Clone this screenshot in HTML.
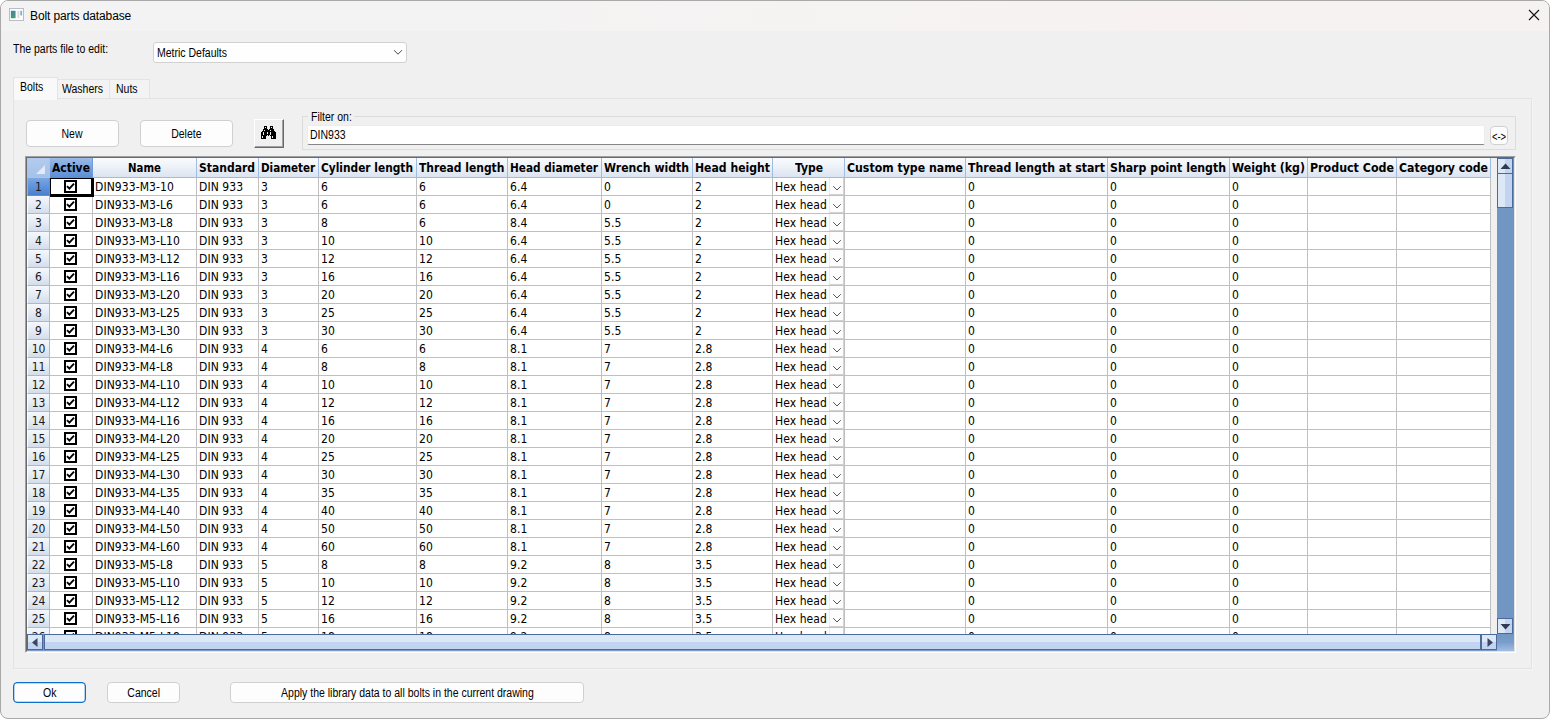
<!DOCTYPE html>
<html lang="en"><head><meta charset="utf-8"><title>Bolt parts database</title>
<style>
html,body{margin:0;padding:0;}
body{width:1550px;height:720px;overflow:hidden;background:#fff;position:relative;
 font-family:"Liberation Sans",sans-serif;font-size:12px;color:#000;}
.abs{position:absolute;}
#win{position:absolute;left:0;top:0;width:1548px;height:717px;border:1px solid #a9a9a9;border-radius:8px;background:#f0f0f0;overflow:hidden;}
#title{position:absolute;left:0;top:0;width:1548px;height:30px;background:linear-gradient(90deg,#f3f3f3 0%,#f4f3f3 35%,#f7f2f1 75%,#f6f2f2 100%);}
#title .cap{position:absolute;left:29px;top:7px;font-size:12px;line-height:16px;letter-spacing:-0.12px;white-space:nowrap;}
.ms{font-family:"Liberation Sans",sans-serif;font-size:12px;white-space:nowrap;transform-origin:0 0;transform:scaleX(0.875);letter-spacing:0;}
.btn{position:absolute;box-sizing:border-box;background:#fdfdfd;border:1px solid #d0d0d0;border-radius:4px;text-align:center;}
.btn span{display:inline-block;font-size:12px;white-space:nowrap;transform:scaleX(0.875);line-height:14px;}
#grid{position:absolute;left:24px;top:155px;width:1491px;height:497px;box-sizing:border-box;border-left:1px solid #a0a0a0;border-top:1px solid #a0a0a0;border-right:1px solid #fff;border-bottom:1px solid #fff;}
#grid2{position:absolute;left:0;top:0;width:1489px;height:495px;box-sizing:border-box;border-left:1px solid #696969;border-top:1px solid #696969;border-right:1px solid #e3e3e3;border-bottom:1px solid #e3e3e3;background:#fff;}
#gi{position:absolute;left:0;top:0;width:1487px;height:493px;overflow:hidden;background:#f0f0f0;font-family:"DejaVu Sans Condensed","DejaVu Sans","Liberation Sans",sans-serif;font-size:12px;}
#cells{position:absolute;left:0;top:0;width:1464px;height:476px;overflow:hidden;
 background-color:#fff;}
.hd{position:absolute;top:0;height:20px;box-sizing:border-box;border-right:1px solid #9fbbe0;border-bottom:1px solid #9fbbe0;
 background:linear-gradient(180deg,#f9fbfd 0%,#eef2f8 45%,#dbe4f1 100%);font-weight:bold;white-space:nowrap;overflow:hidden;line-height:14px;}
.hd span{position:absolute;top:3px;white-space:nowrap;transform-origin:0 0;}
.rh{position:absolute;left:0;width:23px;height:18px;box-sizing:border-box;border-right:1px solid #9fbbe0;border-bottom:1px solid #9fbbe0;border-left:1px solid #fff;
 background:linear-gradient(180deg,#f5f8fc 0%,#e6ecf5 50%,#d3ddec 100%);text-align:center;line-height:16px;color:#1a1a1a;}
.rh span{display:inline-block;position:relative;top:0.5px;}
.vl{position:absolute;top:20px;width:1px;height:460px;background:#c0c0c0;}
.hl{position:absolute;left:22px;height:1px;width:1442px;background:#c0c0c0;}
.c{position:absolute;white-space:nowrap;line-height:14px;height:14px;color:#000;letter-spacing:0.08px;}
.cb{position:absolute;width:9px;height:9px;border:2px solid #000;background:#fff;}
.cb svg{position:absolute;left:0;top:0;}
.dd{position:absolute;width:15px;height:17px;box-sizing:border-box;background:#fdfdfd;border-left:1px solid #ececec;border-bottom:1px solid #d2d2d2;border-right:1px solid #d2d2d2;}
.dd svg{position:absolute;left:1.5px;top:7px;}
</style></head><body>
<div id="win">
<div id="title">
<svg class="abs" style="left:8px;top:7px" width="15" height="13" viewBox="0 0 16 14" preserveAspectRatio="none"><defs><linearGradient id="ig" x1="0" y1="0" x2="1" y2="1"><stop offset="0" stop-color="#3f7fb5"/><stop offset="1" stop-color="#4ea25a"/></linearGradient></defs><rect x="0.5" y="0.5" width="15" height="13" fill="#fdfdfd" stroke="#b4b9c3"/><rect x="2" y="3" width="5" height="8" fill="url(#ig)"/><rect x="9" y="3" width="2" height="8" fill="#dcdcdc"/><rect x="12" y="3" width="2" height="5" fill="#7fb6c9"/></svg>
<div class="cap">Bolt parts database</div>
<svg class="abs" style="left:1527px;top:8px" width="12" height="12" viewBox="0 0 12 12"><path d="M1 1 L11 11 M11 1 L1 11" stroke="#111" stroke-width="1.1" fill="none"/></svg>
</div>

<div class="abs ms" style="left:12px;top:41px;line-height:14px">The parts file to edit:</div>
<div class="abs" style="left:152px;top:41px;width:254px;height:21px;box-sizing:border-box;border:1px solid #d1d1d1;border-radius:3px;background:#fefefe"></div>
<div class="abs ms" style="left:156px;top:45px;line-height:14px">Metric Defaults</div>
<svg class="abs" style="left:392px;top:48px" width="10" height="7" viewBox="0 0 10 7"><path d="M1 1.2 L5 5.2 L9 1.2" stroke="#444" stroke-width="1" fill="none"/></svg>
<div class="abs" style="left:12px;top:97px;width:1519px;height:571px;box-sizing:border-box;border:1px solid #e3e3e3;background:#f0f0f0;box-shadow:1px 1px 0 #f5f5f5"></div>
<div class="abs" style="left:56px;top:78px;width:53px;height:19px;box-sizing:border-box;border:1px solid #e3e3e3;border-bottom:none;background:#f3f3f3"></div>
<div class="abs" style="left:108px;top:78px;width:41px;height:19px;box-sizing:border-box;border:1px solid #e3e3e3;border-bottom:none;background:#f3f3f3"></div>
<div class="abs" style="left:12px;top:76px;width:45px;height:23px;box-sizing:border-box;border:1px solid #e3e3e3;border-bottom:none;background:#f9f9f9"></div>
<div class="abs ms" style="left:19px;top:79px;line-height:14px">Bolts</div>
<div class="abs ms" style="left:61px;top:81px;line-height:14px">Washers</div>
<div class="abs ms" style="left:115px;top:81px;line-height:14px">Nuts</div>
<div class="btn" style="left:25px;top:119px;width:93px;height:27px;padding-top:6px"><span>New</span></div>
<div class="btn" style="left:139px;top:119px;width:93px;height:27px;padding-top:6px"><span>Delete</span></div>
<div class="abs" style="left:253px;top:118px;width:30px;height:29px;box-sizing:border-box;background:#f0f0f0;border-top:1px solid #fff;border-left:1px solid #fff;border-right:1px solid #696969;border-bottom:1px solid #696969;"><div class="abs" style="left:0;top:0;width:27px;height:26px;border-right:1px solid #a0a0a0;border-bottom:1px solid #a0a0a0"></div><svg class="abs" style="left:6px;top:6px" width="15" height="13" viewBox="0 0 15 13" shape-rendering="crispEdges"><path d="M3 0h3v1h-3zM9 0h3v1h-3zM3 1h1v1h-1zM5 1h1v1h-1zM9 1h1v1h-1zM11 1h1v1h-1zM3 2h3v1h-3zM9 2h3v1h-3zM2 3h5v1h-5zM8 3h5v1h-5zM2 4h1v1h-1zM4 4h5v1h-5zM10 4h3v1h-3zM1 5h13v1h-13zM0 6h2v1h-2zM3 6h3v1h-3zM7 6h2v1h-2zM10 6h5v1h-5zM0 7h2v1h-2zM3 7h3v1h-3zM7 7h2v1h-2zM10 7h5v1h-5zM0 8h2v1h-2zM3 8h6v1h-6zM10 8h5v1h-5zM0 9h6v1h-6zM7 9h1v1h-1zM9 9h6v1h-6zM0 10h1v1h-1zM2 10h3v1h-3zM10 10h1v1h-1zM12 10h3v1h-3zM0 11h1v1h-1zM2 11h3v1h-3zM10 11h1v1h-1zM12 11h3v1h-3zM0 12h5v1h-5zM10 12h5v1h-5z" fill="#000"/></svg></div>
<div class="abs" style="left:301px;top:115px;width:1214px;height:34px;box-sizing:border-box;border:1px solid #dcdcdc"></div>
<div class="abs" style="left:307px;top:109px;width:46px;height:14px;background:#f0f0f0"></div>
<div class="abs ms" style="left:310px;top:109px;line-height:14px">Filter on:</div>
<div class="abs" style="left:306px;top:124px;width:1178px;height:20px;box-sizing:border-box;background:#fff;border:1px solid #ececec;border-bottom:1px solid #868686;border-radius:2px"></div>
<div class="abs ms" style="left:309px;top:127px;line-height:14px">DIN933</div>
<div class="btn" style="left:1489px;top:125px;width:18px;height:19px"></div>
<div class="abs" style="left:1479px;top:128.5px;width:38px;text-align:center;font-size:13.5px;line-height:14px;white-space:nowrap;transform:scaleX(0.7)">&lt;-&gt;</div>
<div id="grid"><div id="grid2"><div id="gi">
<div id="cells">
<div class="abs" style="left:0;top:0;width:23px;height:20px;background:linear-gradient(180deg,#b3cbed 0%,#a6c1e8 100%);border-right:1px solid #a9c3ea;box-sizing:border-box;border-bottom:1px solid #a9c3ea"><svg class="abs" style="left:9px;top:7px" width="9" height="9" viewBox="0 0 9 9"><path d="M9 0V9H0z" fill="#e1eaf8"/></svg></div>
<div class="hd" style="left:23px;width:43px;background:linear-gradient(180deg,#9bbbe8 0%,#7aa4df 50%,#5b8fd6 100%);border-right-color:#6f9cdc;border-bottom-color:#5b8fd6;"><span style="left:2.0px;transform:scaleX(1.000)">Active</span></div>
<div class="hd" style="left:66px;width:104px;"><span style="left:35.0px;transform:scaleX(0.945)">Name</span></div>
<div class="hd" style="left:170px;width:62px;"><span style="left:2.0px;transform:scaleX(1.000)">Standard</span></div>
<div class="hd" style="left:232px;width:60px;"><span style="left:2.4px;transform:scaleX(0.962)">Diameter</span></div>
<div class="hd" style="left:292px;width:98px;"><span style="left:2.0px;transform:scaleX(0.984)">Cylinder length</span></div>
<div class="hd" style="left:390px;width:91px;"><span style="left:2.0px;transform:scaleX(0.996)">Thread length</span></div>
<div class="hd" style="left:481px;width:94px;"><span style="left:2.4px;transform:scaleX(0.975)">Head diameter</span></div>
<div class="hd" style="left:575px;width:91px;"><span style="left:2.0px;transform:scaleX(1.010)">Wrench width</span></div>
<div class="hd" style="left:666px;width:80px;"><span style="left:2.0px;transform:scaleX(1.008)">Head height</span></div>
<div class="hd" style="left:746px;width:72px;"><span style="left:22.0px;transform:scaleX(0.999)">Type</span></div>
<div class="hd" style="left:818px;width:121px;"><span style="left:2.0px;transform:scaleX(1.016)">Custom type name</span></div>
<div class="hd" style="left:939px;width:142px;"><span style="left:2.0px;transform:scaleX(1.014)">Thread length at start</span></div>
<div class="hd" style="left:1081px;width:122px;"><span style="left:2.0px;transform:scaleX(1.015)">Sharp point length</span></div>
<div class="hd" style="left:1203px;width:78px;"><span style="left:2.0px;transform:scaleX(1.019)">Weight (kg)</span></div>
<div class="hd" style="left:1281px;width:89px;"><span style="left:2.0px;transform:scaleX(1.027)">Product Code</span></div>
<div class="hd" style="left:1370px;width:94px;"><span style="left:2.0px;transform:scaleX(1.013)">Category code</span></div>
<div class="vl" style="left:65px"></div>
<div class="vl" style="left:169px"></div>
<div class="vl" style="left:231px"></div>
<div class="vl" style="left:291px"></div>
<div class="vl" style="left:389px"></div>
<div class="vl" style="left:480px"></div>
<div class="vl" style="left:574px"></div>
<div class="vl" style="left:665px"></div>
<div class="vl" style="left:745px"></div>
<div class="vl" style="left:817px"></div>
<div class="vl" style="left:938px"></div>
<div class="vl" style="left:1080px"></div>
<div class="vl" style="left:1202px"></div>
<div class="vl" style="left:1280px"></div>
<div class="vl" style="left:1369px"></div>
<div class="vl" style="left:1463px"></div>
<div class="hl" style="top:37px"></div>
<div class="hl" style="top:55px"></div>
<div class="hl" style="top:73px"></div>
<div class="hl" style="top:91px"></div>
<div class="hl" style="top:109px"></div>
<div class="hl" style="top:127px"></div>
<div class="hl" style="top:145px"></div>
<div class="hl" style="top:163px"></div>
<div class="hl" style="top:181px"></div>
<div class="hl" style="top:199px"></div>
<div class="hl" style="top:217px"></div>
<div class="hl" style="top:235px"></div>
<div class="hl" style="top:253px"></div>
<div class="hl" style="top:271px"></div>
<div class="hl" style="top:289px"></div>
<div class="hl" style="top:307px"></div>
<div class="hl" style="top:325px"></div>
<div class="hl" style="top:343px"></div>
<div class="hl" style="top:361px"></div>
<div class="hl" style="top:379px"></div>
<div class="hl" style="top:397px"></div>
<div class="hl" style="top:415px"></div>
<div class="hl" style="top:433px"></div>
<div class="hl" style="top:451px"></div>
<div class="hl" style="top:469px"></div>
<div class="hl" style="top:487px"></div>
<div class="rh" style="top:20px;background:linear-gradient(180deg,#7ba7e4 0%,#5f93dc 50%,#4a80cb 100%);border-left-color:#8fb3e8;border-bottom-color:#5b8fd6;border-right-color:#5b8fd6;"><span>1</span></div>
<div class="cb" style="left:37px;top:22px"><svg width="9" height="9" viewBox="0 0 9 9"><path d="M1 4.2 L3.4 6.6 L8 1.6" stroke="#000" stroke-width="1.9" fill="none"/></svg></div>
<div class="c" style="left:68px;top:22px">DIN933-M3-10</div>
<div class="c" style="left:172px;top:22px">DIN 933</div>
<div class="c" style="left:234px;top:22px">3</div>
<div class="c" style="left:294px;top:22px">6</div>
<div class="c" style="left:392px;top:22px">6</div>
<div class="c" style="left:483px;top:22px">6.4</div>
<div class="c" style="left:577px;top:22px">0</div>
<div class="c" style="left:668px;top:22px">2</div>
<div class="c" style="left:748px;top:22px">Hex head</div>
<div class="c" style="left:941px;top:22px">0</div>
<div class="c" style="left:1083px;top:22px">0</div>
<div class="c" style="left:1205px;top:22px">0</div>
<div class="dd" style="left:802px;top:20px"><svg width="10" height="7" viewBox="0 0 10 7"><path d="M1.2 1.2 L5 5 L8.8 1.2" stroke="#555" stroke-width="1" fill="none"/></svg></div>
<div class="rh" style="top:38px;"><span>2</span></div>
<div class="cb" style="left:37px;top:40px"><svg width="9" height="9" viewBox="0 0 9 9"><path d="M1 4.2 L3.4 6.6 L8 1.6" stroke="#000" stroke-width="1.9" fill="none"/></svg></div>
<div class="c" style="left:68px;top:40px">DIN933-M3-L6</div>
<div class="c" style="left:172px;top:40px">DIN 933</div>
<div class="c" style="left:234px;top:40px">3</div>
<div class="c" style="left:294px;top:40px">6</div>
<div class="c" style="left:392px;top:40px">6</div>
<div class="c" style="left:483px;top:40px">6.4</div>
<div class="c" style="left:577px;top:40px">0</div>
<div class="c" style="left:668px;top:40px">2</div>
<div class="c" style="left:748px;top:40px">Hex head</div>
<div class="c" style="left:941px;top:40px">0</div>
<div class="c" style="left:1083px;top:40px">0</div>
<div class="c" style="left:1205px;top:40px">0</div>
<div class="dd" style="left:802px;top:38px"><svg width="10" height="7" viewBox="0 0 10 7"><path d="M1.2 1.2 L5 5 L8.8 1.2" stroke="#555" stroke-width="1" fill="none"/></svg></div>
<div class="rh" style="top:56px;"><span>3</span></div>
<div class="cb" style="left:37px;top:58px"><svg width="9" height="9" viewBox="0 0 9 9"><path d="M1 4.2 L3.4 6.6 L8 1.6" stroke="#000" stroke-width="1.9" fill="none"/></svg></div>
<div class="c" style="left:68px;top:58px">DIN933-M3-L8</div>
<div class="c" style="left:172px;top:58px">DIN 933</div>
<div class="c" style="left:234px;top:58px">3</div>
<div class="c" style="left:294px;top:58px">8</div>
<div class="c" style="left:392px;top:58px">6</div>
<div class="c" style="left:483px;top:58px">8.4</div>
<div class="c" style="left:577px;top:58px">5.5</div>
<div class="c" style="left:668px;top:58px">2</div>
<div class="c" style="left:748px;top:58px">Hex head</div>
<div class="c" style="left:941px;top:58px">0</div>
<div class="c" style="left:1083px;top:58px">0</div>
<div class="c" style="left:1205px;top:58px">0</div>
<div class="dd" style="left:802px;top:56px"><svg width="10" height="7" viewBox="0 0 10 7"><path d="M1.2 1.2 L5 5 L8.8 1.2" stroke="#555" stroke-width="1" fill="none"/></svg></div>
<div class="rh" style="top:74px;"><span>4</span></div>
<div class="cb" style="left:37px;top:76px"><svg width="9" height="9" viewBox="0 0 9 9"><path d="M1 4.2 L3.4 6.6 L8 1.6" stroke="#000" stroke-width="1.9" fill="none"/></svg></div>
<div class="c" style="left:68px;top:76px">DIN933-M3-L10</div>
<div class="c" style="left:172px;top:76px">DIN 933</div>
<div class="c" style="left:234px;top:76px">3</div>
<div class="c" style="left:294px;top:76px">10</div>
<div class="c" style="left:392px;top:76px">10</div>
<div class="c" style="left:483px;top:76px">6.4</div>
<div class="c" style="left:577px;top:76px">5.5</div>
<div class="c" style="left:668px;top:76px">2</div>
<div class="c" style="left:748px;top:76px">Hex head</div>
<div class="c" style="left:941px;top:76px">0</div>
<div class="c" style="left:1083px;top:76px">0</div>
<div class="c" style="left:1205px;top:76px">0</div>
<div class="dd" style="left:802px;top:74px"><svg width="10" height="7" viewBox="0 0 10 7"><path d="M1.2 1.2 L5 5 L8.8 1.2" stroke="#555" stroke-width="1" fill="none"/></svg></div>
<div class="rh" style="top:92px;"><span>5</span></div>
<div class="cb" style="left:37px;top:94px"><svg width="9" height="9" viewBox="0 0 9 9"><path d="M1 4.2 L3.4 6.6 L8 1.6" stroke="#000" stroke-width="1.9" fill="none"/></svg></div>
<div class="c" style="left:68px;top:94px">DIN933-M3-L12</div>
<div class="c" style="left:172px;top:94px">DIN 933</div>
<div class="c" style="left:234px;top:94px">3</div>
<div class="c" style="left:294px;top:94px">12</div>
<div class="c" style="left:392px;top:94px">12</div>
<div class="c" style="left:483px;top:94px">6.4</div>
<div class="c" style="left:577px;top:94px">5.5</div>
<div class="c" style="left:668px;top:94px">2</div>
<div class="c" style="left:748px;top:94px">Hex head</div>
<div class="c" style="left:941px;top:94px">0</div>
<div class="c" style="left:1083px;top:94px">0</div>
<div class="c" style="left:1205px;top:94px">0</div>
<div class="dd" style="left:802px;top:92px"><svg width="10" height="7" viewBox="0 0 10 7"><path d="M1.2 1.2 L5 5 L8.8 1.2" stroke="#555" stroke-width="1" fill="none"/></svg></div>
<div class="rh" style="top:110px;"><span>6</span></div>
<div class="cb" style="left:37px;top:112px"><svg width="9" height="9" viewBox="0 0 9 9"><path d="M1 4.2 L3.4 6.6 L8 1.6" stroke="#000" stroke-width="1.9" fill="none"/></svg></div>
<div class="c" style="left:68px;top:112px">DIN933-M3-L16</div>
<div class="c" style="left:172px;top:112px">DIN 933</div>
<div class="c" style="left:234px;top:112px">3</div>
<div class="c" style="left:294px;top:112px">16</div>
<div class="c" style="left:392px;top:112px">16</div>
<div class="c" style="left:483px;top:112px">6.4</div>
<div class="c" style="left:577px;top:112px">5.5</div>
<div class="c" style="left:668px;top:112px">2</div>
<div class="c" style="left:748px;top:112px">Hex head</div>
<div class="c" style="left:941px;top:112px">0</div>
<div class="c" style="left:1083px;top:112px">0</div>
<div class="c" style="left:1205px;top:112px">0</div>
<div class="dd" style="left:802px;top:110px"><svg width="10" height="7" viewBox="0 0 10 7"><path d="M1.2 1.2 L5 5 L8.8 1.2" stroke="#555" stroke-width="1" fill="none"/></svg></div>
<div class="rh" style="top:128px;"><span>7</span></div>
<div class="cb" style="left:37px;top:130px"><svg width="9" height="9" viewBox="0 0 9 9"><path d="M1 4.2 L3.4 6.6 L8 1.6" stroke="#000" stroke-width="1.9" fill="none"/></svg></div>
<div class="c" style="left:68px;top:130px">DIN933-M3-L20</div>
<div class="c" style="left:172px;top:130px">DIN 933</div>
<div class="c" style="left:234px;top:130px">3</div>
<div class="c" style="left:294px;top:130px">20</div>
<div class="c" style="left:392px;top:130px">20</div>
<div class="c" style="left:483px;top:130px">6.4</div>
<div class="c" style="left:577px;top:130px">5.5</div>
<div class="c" style="left:668px;top:130px">2</div>
<div class="c" style="left:748px;top:130px">Hex head</div>
<div class="c" style="left:941px;top:130px">0</div>
<div class="c" style="left:1083px;top:130px">0</div>
<div class="c" style="left:1205px;top:130px">0</div>
<div class="dd" style="left:802px;top:128px"><svg width="10" height="7" viewBox="0 0 10 7"><path d="M1.2 1.2 L5 5 L8.8 1.2" stroke="#555" stroke-width="1" fill="none"/></svg></div>
<div class="rh" style="top:146px;"><span>8</span></div>
<div class="cb" style="left:37px;top:148px"><svg width="9" height="9" viewBox="0 0 9 9"><path d="M1 4.2 L3.4 6.6 L8 1.6" stroke="#000" stroke-width="1.9" fill="none"/></svg></div>
<div class="c" style="left:68px;top:148px">DIN933-M3-L25</div>
<div class="c" style="left:172px;top:148px">DIN 933</div>
<div class="c" style="left:234px;top:148px">3</div>
<div class="c" style="left:294px;top:148px">25</div>
<div class="c" style="left:392px;top:148px">25</div>
<div class="c" style="left:483px;top:148px">6.4</div>
<div class="c" style="left:577px;top:148px">5.5</div>
<div class="c" style="left:668px;top:148px">2</div>
<div class="c" style="left:748px;top:148px">Hex head</div>
<div class="c" style="left:941px;top:148px">0</div>
<div class="c" style="left:1083px;top:148px">0</div>
<div class="c" style="left:1205px;top:148px">0</div>
<div class="dd" style="left:802px;top:146px"><svg width="10" height="7" viewBox="0 0 10 7"><path d="M1.2 1.2 L5 5 L8.8 1.2" stroke="#555" stroke-width="1" fill="none"/></svg></div>
<div class="rh" style="top:164px;"><span>9</span></div>
<div class="cb" style="left:37px;top:166px"><svg width="9" height="9" viewBox="0 0 9 9"><path d="M1 4.2 L3.4 6.6 L8 1.6" stroke="#000" stroke-width="1.9" fill="none"/></svg></div>
<div class="c" style="left:68px;top:166px">DIN933-M3-L30</div>
<div class="c" style="left:172px;top:166px">DIN 933</div>
<div class="c" style="left:234px;top:166px">3</div>
<div class="c" style="left:294px;top:166px">30</div>
<div class="c" style="left:392px;top:166px">30</div>
<div class="c" style="left:483px;top:166px">6.4</div>
<div class="c" style="left:577px;top:166px">5.5</div>
<div class="c" style="left:668px;top:166px">2</div>
<div class="c" style="left:748px;top:166px">Hex head</div>
<div class="c" style="left:941px;top:166px">0</div>
<div class="c" style="left:1083px;top:166px">0</div>
<div class="c" style="left:1205px;top:166px">0</div>
<div class="dd" style="left:802px;top:164px"><svg width="10" height="7" viewBox="0 0 10 7"><path d="M1.2 1.2 L5 5 L8.8 1.2" stroke="#555" stroke-width="1" fill="none"/></svg></div>
<div class="rh" style="top:182px;"><span>10</span></div>
<div class="cb" style="left:37px;top:184px"><svg width="9" height="9" viewBox="0 0 9 9"><path d="M1 4.2 L3.4 6.6 L8 1.6" stroke="#000" stroke-width="1.9" fill="none"/></svg></div>
<div class="c" style="left:68px;top:184px">DIN933-M4-L6</div>
<div class="c" style="left:172px;top:184px">DIN 933</div>
<div class="c" style="left:234px;top:184px">4</div>
<div class="c" style="left:294px;top:184px">6</div>
<div class="c" style="left:392px;top:184px">6</div>
<div class="c" style="left:483px;top:184px">8.1</div>
<div class="c" style="left:577px;top:184px">7</div>
<div class="c" style="left:668px;top:184px">2.8</div>
<div class="c" style="left:748px;top:184px">Hex head</div>
<div class="c" style="left:941px;top:184px">0</div>
<div class="c" style="left:1083px;top:184px">0</div>
<div class="c" style="left:1205px;top:184px">0</div>
<div class="dd" style="left:802px;top:182px"><svg width="10" height="7" viewBox="0 0 10 7"><path d="M1.2 1.2 L5 5 L8.8 1.2" stroke="#555" stroke-width="1" fill="none"/></svg></div>
<div class="rh" style="top:200px;"><span>11</span></div>
<div class="cb" style="left:37px;top:202px"><svg width="9" height="9" viewBox="0 0 9 9"><path d="M1 4.2 L3.4 6.6 L8 1.6" stroke="#000" stroke-width="1.9" fill="none"/></svg></div>
<div class="c" style="left:68px;top:202px">DIN933-M4-L8</div>
<div class="c" style="left:172px;top:202px">DIN 933</div>
<div class="c" style="left:234px;top:202px">4</div>
<div class="c" style="left:294px;top:202px">8</div>
<div class="c" style="left:392px;top:202px">8</div>
<div class="c" style="left:483px;top:202px">8.1</div>
<div class="c" style="left:577px;top:202px">7</div>
<div class="c" style="left:668px;top:202px">2.8</div>
<div class="c" style="left:748px;top:202px">Hex head</div>
<div class="c" style="left:941px;top:202px">0</div>
<div class="c" style="left:1083px;top:202px">0</div>
<div class="c" style="left:1205px;top:202px">0</div>
<div class="dd" style="left:802px;top:200px"><svg width="10" height="7" viewBox="0 0 10 7"><path d="M1.2 1.2 L5 5 L8.8 1.2" stroke="#555" stroke-width="1" fill="none"/></svg></div>
<div class="rh" style="top:218px;"><span>12</span></div>
<div class="cb" style="left:37px;top:220px"><svg width="9" height="9" viewBox="0 0 9 9"><path d="M1 4.2 L3.4 6.6 L8 1.6" stroke="#000" stroke-width="1.9" fill="none"/></svg></div>
<div class="c" style="left:68px;top:220px">DIN933-M4-L10</div>
<div class="c" style="left:172px;top:220px">DIN 933</div>
<div class="c" style="left:234px;top:220px">4</div>
<div class="c" style="left:294px;top:220px">10</div>
<div class="c" style="left:392px;top:220px">10</div>
<div class="c" style="left:483px;top:220px">8.1</div>
<div class="c" style="left:577px;top:220px">7</div>
<div class="c" style="left:668px;top:220px">2.8</div>
<div class="c" style="left:748px;top:220px">Hex head</div>
<div class="c" style="left:941px;top:220px">0</div>
<div class="c" style="left:1083px;top:220px">0</div>
<div class="c" style="left:1205px;top:220px">0</div>
<div class="dd" style="left:802px;top:218px"><svg width="10" height="7" viewBox="0 0 10 7"><path d="M1.2 1.2 L5 5 L8.8 1.2" stroke="#555" stroke-width="1" fill="none"/></svg></div>
<div class="rh" style="top:236px;"><span>13</span></div>
<div class="cb" style="left:37px;top:238px"><svg width="9" height="9" viewBox="0 0 9 9"><path d="M1 4.2 L3.4 6.6 L8 1.6" stroke="#000" stroke-width="1.9" fill="none"/></svg></div>
<div class="c" style="left:68px;top:238px">DIN933-M4-L12</div>
<div class="c" style="left:172px;top:238px">DIN 933</div>
<div class="c" style="left:234px;top:238px">4</div>
<div class="c" style="left:294px;top:238px">12</div>
<div class="c" style="left:392px;top:238px">12</div>
<div class="c" style="left:483px;top:238px">8.1</div>
<div class="c" style="left:577px;top:238px">7</div>
<div class="c" style="left:668px;top:238px">2.8</div>
<div class="c" style="left:748px;top:238px">Hex head</div>
<div class="c" style="left:941px;top:238px">0</div>
<div class="c" style="left:1083px;top:238px">0</div>
<div class="c" style="left:1205px;top:238px">0</div>
<div class="dd" style="left:802px;top:236px"><svg width="10" height="7" viewBox="0 0 10 7"><path d="M1.2 1.2 L5 5 L8.8 1.2" stroke="#555" stroke-width="1" fill="none"/></svg></div>
<div class="rh" style="top:254px;"><span>14</span></div>
<div class="cb" style="left:37px;top:256px"><svg width="9" height="9" viewBox="0 0 9 9"><path d="M1 4.2 L3.4 6.6 L8 1.6" stroke="#000" stroke-width="1.9" fill="none"/></svg></div>
<div class="c" style="left:68px;top:256px">DIN933-M4-L16</div>
<div class="c" style="left:172px;top:256px">DIN 933</div>
<div class="c" style="left:234px;top:256px">4</div>
<div class="c" style="left:294px;top:256px">16</div>
<div class="c" style="left:392px;top:256px">16</div>
<div class="c" style="left:483px;top:256px">8.1</div>
<div class="c" style="left:577px;top:256px">7</div>
<div class="c" style="left:668px;top:256px">2.8</div>
<div class="c" style="left:748px;top:256px">Hex head</div>
<div class="c" style="left:941px;top:256px">0</div>
<div class="c" style="left:1083px;top:256px">0</div>
<div class="c" style="left:1205px;top:256px">0</div>
<div class="dd" style="left:802px;top:254px"><svg width="10" height="7" viewBox="0 0 10 7"><path d="M1.2 1.2 L5 5 L8.8 1.2" stroke="#555" stroke-width="1" fill="none"/></svg></div>
<div class="rh" style="top:272px;"><span>15</span></div>
<div class="cb" style="left:37px;top:274px"><svg width="9" height="9" viewBox="0 0 9 9"><path d="M1 4.2 L3.4 6.6 L8 1.6" stroke="#000" stroke-width="1.9" fill="none"/></svg></div>
<div class="c" style="left:68px;top:274px">DIN933-M4-L20</div>
<div class="c" style="left:172px;top:274px">DIN 933</div>
<div class="c" style="left:234px;top:274px">4</div>
<div class="c" style="left:294px;top:274px">20</div>
<div class="c" style="left:392px;top:274px">20</div>
<div class="c" style="left:483px;top:274px">8.1</div>
<div class="c" style="left:577px;top:274px">7</div>
<div class="c" style="left:668px;top:274px">2.8</div>
<div class="c" style="left:748px;top:274px">Hex head</div>
<div class="c" style="left:941px;top:274px">0</div>
<div class="c" style="left:1083px;top:274px">0</div>
<div class="c" style="left:1205px;top:274px">0</div>
<div class="dd" style="left:802px;top:272px"><svg width="10" height="7" viewBox="0 0 10 7"><path d="M1.2 1.2 L5 5 L8.8 1.2" stroke="#555" stroke-width="1" fill="none"/></svg></div>
<div class="rh" style="top:290px;"><span>16</span></div>
<div class="cb" style="left:37px;top:292px"><svg width="9" height="9" viewBox="0 0 9 9"><path d="M1 4.2 L3.4 6.6 L8 1.6" stroke="#000" stroke-width="1.9" fill="none"/></svg></div>
<div class="c" style="left:68px;top:292px">DIN933-M4-L25</div>
<div class="c" style="left:172px;top:292px">DIN 933</div>
<div class="c" style="left:234px;top:292px">4</div>
<div class="c" style="left:294px;top:292px">25</div>
<div class="c" style="left:392px;top:292px">25</div>
<div class="c" style="left:483px;top:292px">8.1</div>
<div class="c" style="left:577px;top:292px">7</div>
<div class="c" style="left:668px;top:292px">2.8</div>
<div class="c" style="left:748px;top:292px">Hex head</div>
<div class="c" style="left:941px;top:292px">0</div>
<div class="c" style="left:1083px;top:292px">0</div>
<div class="c" style="left:1205px;top:292px">0</div>
<div class="dd" style="left:802px;top:290px"><svg width="10" height="7" viewBox="0 0 10 7"><path d="M1.2 1.2 L5 5 L8.8 1.2" stroke="#555" stroke-width="1" fill="none"/></svg></div>
<div class="rh" style="top:308px;"><span>17</span></div>
<div class="cb" style="left:37px;top:310px"><svg width="9" height="9" viewBox="0 0 9 9"><path d="M1 4.2 L3.4 6.6 L8 1.6" stroke="#000" stroke-width="1.9" fill="none"/></svg></div>
<div class="c" style="left:68px;top:310px">DIN933-M4-L30</div>
<div class="c" style="left:172px;top:310px">DIN 933</div>
<div class="c" style="left:234px;top:310px">4</div>
<div class="c" style="left:294px;top:310px">30</div>
<div class="c" style="left:392px;top:310px">30</div>
<div class="c" style="left:483px;top:310px">8.1</div>
<div class="c" style="left:577px;top:310px">7</div>
<div class="c" style="left:668px;top:310px">2.8</div>
<div class="c" style="left:748px;top:310px">Hex head</div>
<div class="c" style="left:941px;top:310px">0</div>
<div class="c" style="left:1083px;top:310px">0</div>
<div class="c" style="left:1205px;top:310px">0</div>
<div class="dd" style="left:802px;top:308px"><svg width="10" height="7" viewBox="0 0 10 7"><path d="M1.2 1.2 L5 5 L8.8 1.2" stroke="#555" stroke-width="1" fill="none"/></svg></div>
<div class="rh" style="top:326px;"><span>18</span></div>
<div class="cb" style="left:37px;top:328px"><svg width="9" height="9" viewBox="0 0 9 9"><path d="M1 4.2 L3.4 6.6 L8 1.6" stroke="#000" stroke-width="1.9" fill="none"/></svg></div>
<div class="c" style="left:68px;top:328px">DIN933-M4-L35</div>
<div class="c" style="left:172px;top:328px">DIN 933</div>
<div class="c" style="left:234px;top:328px">4</div>
<div class="c" style="left:294px;top:328px">35</div>
<div class="c" style="left:392px;top:328px">35</div>
<div class="c" style="left:483px;top:328px">8.1</div>
<div class="c" style="left:577px;top:328px">7</div>
<div class="c" style="left:668px;top:328px">2.8</div>
<div class="c" style="left:748px;top:328px">Hex head</div>
<div class="c" style="left:941px;top:328px">0</div>
<div class="c" style="left:1083px;top:328px">0</div>
<div class="c" style="left:1205px;top:328px">0</div>
<div class="dd" style="left:802px;top:326px"><svg width="10" height="7" viewBox="0 0 10 7"><path d="M1.2 1.2 L5 5 L8.8 1.2" stroke="#555" stroke-width="1" fill="none"/></svg></div>
<div class="rh" style="top:344px;"><span>19</span></div>
<div class="cb" style="left:37px;top:346px"><svg width="9" height="9" viewBox="0 0 9 9"><path d="M1 4.2 L3.4 6.6 L8 1.6" stroke="#000" stroke-width="1.9" fill="none"/></svg></div>
<div class="c" style="left:68px;top:346px">DIN933-M4-L40</div>
<div class="c" style="left:172px;top:346px">DIN 933</div>
<div class="c" style="left:234px;top:346px">4</div>
<div class="c" style="left:294px;top:346px">40</div>
<div class="c" style="left:392px;top:346px">40</div>
<div class="c" style="left:483px;top:346px">8.1</div>
<div class="c" style="left:577px;top:346px">7</div>
<div class="c" style="left:668px;top:346px">2.8</div>
<div class="c" style="left:748px;top:346px">Hex head</div>
<div class="c" style="left:941px;top:346px">0</div>
<div class="c" style="left:1083px;top:346px">0</div>
<div class="c" style="left:1205px;top:346px">0</div>
<div class="dd" style="left:802px;top:344px"><svg width="10" height="7" viewBox="0 0 10 7"><path d="M1.2 1.2 L5 5 L8.8 1.2" stroke="#555" stroke-width="1" fill="none"/></svg></div>
<div class="rh" style="top:362px;"><span>20</span></div>
<div class="cb" style="left:37px;top:364px"><svg width="9" height="9" viewBox="0 0 9 9"><path d="M1 4.2 L3.4 6.6 L8 1.6" stroke="#000" stroke-width="1.9" fill="none"/></svg></div>
<div class="c" style="left:68px;top:364px">DIN933-M4-L50</div>
<div class="c" style="left:172px;top:364px">DIN 933</div>
<div class="c" style="left:234px;top:364px">4</div>
<div class="c" style="left:294px;top:364px">50</div>
<div class="c" style="left:392px;top:364px">50</div>
<div class="c" style="left:483px;top:364px">8.1</div>
<div class="c" style="left:577px;top:364px">7</div>
<div class="c" style="left:668px;top:364px">2.8</div>
<div class="c" style="left:748px;top:364px">Hex head</div>
<div class="c" style="left:941px;top:364px">0</div>
<div class="c" style="left:1083px;top:364px">0</div>
<div class="c" style="left:1205px;top:364px">0</div>
<div class="dd" style="left:802px;top:362px"><svg width="10" height="7" viewBox="0 0 10 7"><path d="M1.2 1.2 L5 5 L8.8 1.2" stroke="#555" stroke-width="1" fill="none"/></svg></div>
<div class="rh" style="top:380px;"><span>21</span></div>
<div class="cb" style="left:37px;top:382px"><svg width="9" height="9" viewBox="0 0 9 9"><path d="M1 4.2 L3.4 6.6 L8 1.6" stroke="#000" stroke-width="1.9" fill="none"/></svg></div>
<div class="c" style="left:68px;top:382px">DIN933-M4-L60</div>
<div class="c" style="left:172px;top:382px">DIN 933</div>
<div class="c" style="left:234px;top:382px">4</div>
<div class="c" style="left:294px;top:382px">60</div>
<div class="c" style="left:392px;top:382px">60</div>
<div class="c" style="left:483px;top:382px">8.1</div>
<div class="c" style="left:577px;top:382px">7</div>
<div class="c" style="left:668px;top:382px">2.8</div>
<div class="c" style="left:748px;top:382px">Hex head</div>
<div class="c" style="left:941px;top:382px">0</div>
<div class="c" style="left:1083px;top:382px">0</div>
<div class="c" style="left:1205px;top:382px">0</div>
<div class="dd" style="left:802px;top:380px"><svg width="10" height="7" viewBox="0 0 10 7"><path d="M1.2 1.2 L5 5 L8.8 1.2" stroke="#555" stroke-width="1" fill="none"/></svg></div>
<div class="rh" style="top:398px;"><span>22</span></div>
<div class="cb" style="left:37px;top:400px"><svg width="9" height="9" viewBox="0 0 9 9"><path d="M1 4.2 L3.4 6.6 L8 1.6" stroke="#000" stroke-width="1.9" fill="none"/></svg></div>
<div class="c" style="left:68px;top:400px">DIN933-M5-L8</div>
<div class="c" style="left:172px;top:400px">DIN 933</div>
<div class="c" style="left:234px;top:400px">5</div>
<div class="c" style="left:294px;top:400px">8</div>
<div class="c" style="left:392px;top:400px">8</div>
<div class="c" style="left:483px;top:400px">9.2</div>
<div class="c" style="left:577px;top:400px">8</div>
<div class="c" style="left:668px;top:400px">3.5</div>
<div class="c" style="left:748px;top:400px">Hex head</div>
<div class="c" style="left:941px;top:400px">0</div>
<div class="c" style="left:1083px;top:400px">0</div>
<div class="c" style="left:1205px;top:400px">0</div>
<div class="dd" style="left:802px;top:398px"><svg width="10" height="7" viewBox="0 0 10 7"><path d="M1.2 1.2 L5 5 L8.8 1.2" stroke="#555" stroke-width="1" fill="none"/></svg></div>
<div class="rh" style="top:416px;"><span>23</span></div>
<div class="cb" style="left:37px;top:418px"><svg width="9" height="9" viewBox="0 0 9 9"><path d="M1 4.2 L3.4 6.6 L8 1.6" stroke="#000" stroke-width="1.9" fill="none"/></svg></div>
<div class="c" style="left:68px;top:418px">DIN933-M5-L10</div>
<div class="c" style="left:172px;top:418px">DIN 933</div>
<div class="c" style="left:234px;top:418px">5</div>
<div class="c" style="left:294px;top:418px">10</div>
<div class="c" style="left:392px;top:418px">10</div>
<div class="c" style="left:483px;top:418px">9.2</div>
<div class="c" style="left:577px;top:418px">8</div>
<div class="c" style="left:668px;top:418px">3.5</div>
<div class="c" style="left:748px;top:418px">Hex head</div>
<div class="c" style="left:941px;top:418px">0</div>
<div class="c" style="left:1083px;top:418px">0</div>
<div class="c" style="left:1205px;top:418px">0</div>
<div class="dd" style="left:802px;top:416px"><svg width="10" height="7" viewBox="0 0 10 7"><path d="M1.2 1.2 L5 5 L8.8 1.2" stroke="#555" stroke-width="1" fill="none"/></svg></div>
<div class="rh" style="top:434px;"><span>24</span></div>
<div class="cb" style="left:37px;top:436px"><svg width="9" height="9" viewBox="0 0 9 9"><path d="M1 4.2 L3.4 6.6 L8 1.6" stroke="#000" stroke-width="1.9" fill="none"/></svg></div>
<div class="c" style="left:68px;top:436px">DIN933-M5-L12</div>
<div class="c" style="left:172px;top:436px">DIN 933</div>
<div class="c" style="left:234px;top:436px">5</div>
<div class="c" style="left:294px;top:436px">12</div>
<div class="c" style="left:392px;top:436px">12</div>
<div class="c" style="left:483px;top:436px">9.2</div>
<div class="c" style="left:577px;top:436px">8</div>
<div class="c" style="left:668px;top:436px">3.5</div>
<div class="c" style="left:748px;top:436px">Hex head</div>
<div class="c" style="left:941px;top:436px">0</div>
<div class="c" style="left:1083px;top:436px">0</div>
<div class="c" style="left:1205px;top:436px">0</div>
<div class="dd" style="left:802px;top:434px"><svg width="10" height="7" viewBox="0 0 10 7"><path d="M1.2 1.2 L5 5 L8.8 1.2" stroke="#555" stroke-width="1" fill="none"/></svg></div>
<div class="rh" style="top:452px;"><span>25</span></div>
<div class="cb" style="left:37px;top:454px"><svg width="9" height="9" viewBox="0 0 9 9"><path d="M1 4.2 L3.4 6.6 L8 1.6" stroke="#000" stroke-width="1.9" fill="none"/></svg></div>
<div class="c" style="left:68px;top:454px">DIN933-M5-L16</div>
<div class="c" style="left:172px;top:454px">DIN 933</div>
<div class="c" style="left:234px;top:454px">5</div>
<div class="c" style="left:294px;top:454px">16</div>
<div class="c" style="left:392px;top:454px">16</div>
<div class="c" style="left:483px;top:454px">9.2</div>
<div class="c" style="left:577px;top:454px">8</div>
<div class="c" style="left:668px;top:454px">3.5</div>
<div class="c" style="left:748px;top:454px">Hex head</div>
<div class="c" style="left:941px;top:454px">0</div>
<div class="c" style="left:1083px;top:454px">0</div>
<div class="c" style="left:1205px;top:454px">0</div>
<div class="dd" style="left:802px;top:452px"><svg width="10" height="7" viewBox="0 0 10 7"><path d="M1.2 1.2 L5 5 L8.8 1.2" stroke="#555" stroke-width="1" fill="none"/></svg></div>
<div class="rh" style="top:470px;"><span>26</span></div>
<div class="cb" style="left:37px;top:472px"><svg width="9" height="9" viewBox="0 0 9 9"><path d="M1 4.2 L3.4 6.6 L8 1.6" stroke="#000" stroke-width="1.9" fill="none"/></svg></div>
<div class="c" style="left:68px;top:472px">DIN933-M5-L18</div>
<div class="c" style="left:172px;top:472px">DIN 933</div>
<div class="c" style="left:234px;top:472px">5</div>
<div class="c" style="left:294px;top:472px">18</div>
<div class="c" style="left:392px;top:472px">18</div>
<div class="c" style="left:483px;top:472px">9.2</div>
<div class="c" style="left:577px;top:472px">8</div>
<div class="c" style="left:668px;top:472px">3.5</div>
<div class="c" style="left:748px;top:472px">Hex head</div>
<div class="c" style="left:941px;top:472px">0</div>
<div class="c" style="left:1083px;top:472px">0</div>
<div class="c" style="left:1205px;top:472px">0</div>
<div class="dd" style="left:802px;top:470px"><svg width="10" height="7" viewBox="0 0 10 7"><path d="M1.2 1.2 L5 5 L8.8 1.2" stroke="#555" stroke-width="1" fill="none"/></svg></div>
<div class="abs" style="left:23px;top:20px;width:40px;height:15px;border:solid #000;border-width:1px 3px 3px 1px;"></div>
</div>
<div class="abs" style="left:1470px;top:0;width:17px;height:476px;background:#7096c1"></div>
<div class="abs" style="left:1470px;top:0px;width:16px;height:16px;box-sizing:border-box;border:1px solid #4a6a9b;background:linear-gradient(90deg,#dde8f7 0%,#dde8f7 50%,#c2d4ef 50%,#c2d4ef 100%)"><svg class="abs" style="left:2px;top:4px" width="11" height="6" viewBox="0 0 11 6"><path d="M0.5 6 L5.5 0.5 L10.5 6z" fill="#2f3b55"/></svg></div>
<div class="abs" style="left:1470px;top:16px;width:16px;height:34px;box-sizing:border-box;border:1px solid #4a6a9b;border-top:none;background:linear-gradient(90deg,#dde8f7 0%,#dde8f7 50%,#c2d4ef 50%,#c2d4ef 100%)"></div>
<div class="abs" style="left:1470px;top:460px;width:16px;height:16px;box-sizing:border-box;border:1px solid #4a6a9b;background:linear-gradient(90deg,#dde8f7 0%,#dde8f7 50%,#c2d4ef 50%,#c2d4ef 100%)"><svg class="abs" style="left:2px;top:5px" width="11" height="6" viewBox="0 0 11 6"><path d="M0.5 0 L5.5 5.5 L10.5 0z" fill="#2f3b55"/></svg></div>
<div class="abs" style="left:0;top:476px;width:1487px;height:17px;background:linear-gradient(180deg,#7096c1 0%,#7096c1 80%,#7d9dcb 100%)"></div>
<div class="abs" style="left:17px;top:476px;width:1437px;height:16px;box-sizing:border-box;border:1px solid #4a6a9b;background:linear-gradient(180deg,#dde8f7 0%,#dde8f7 50%,#c2d4ef 50%,#c2d4ef 100%)"></div>
<div class="abs" style="left:0px;top:476px;width:16px;height:16px;box-sizing:border-box;border:1px solid #4a6a9b;background:linear-gradient(180deg,#dde8f7 0%,#dde8f7 50%,#c2d4ef 50%,#c2d4ef 100%)"><svg class="abs" style="left:4px;top:3px" width="6" height="9" viewBox="0 0 6 9"><path d="M5.5 0 L0 4.5 L5.5 9z" fill="#3a4663"/></svg></div>
<div class="abs" style="left:1454px;top:476px;width:16px;height:16px;box-sizing:border-box;border:1px solid #4a6a9b;background:linear-gradient(180deg,#dde8f7 0%,#dde8f7 50%,#c2d4ef 50%,#c2d4ef 100%)"><svg class="abs" style="left:5px;top:3px" width="6" height="9" viewBox="0 0 6 9"><path d="M0.5 0 L6 4.5 L0.5 9z" fill="#3a4663"/></svg></div>
<div class="abs" style="left:1470px;top:476px;width:17px;height:17px;background:linear-gradient(180deg,#7096c1 0%,#7a9ecb 50%,#a3bde2 100%)"></div>
</div></div></div>
<div class="btn" style="left:12px;top:681px;width:73px;height:21px;padding-top:3px;border:1px solid #0a6fcb;box-shadow:inset 0 0 0 0.3px #0a6fcb"><span>Ok</span></div>
<div class="btn" style="left:106px;top:681px;width:73px;height:21px;padding-top:3px"><span>Cancel</span></div>
<div class="btn" style="left:229px;top:681px;width:354px;height:21px;padding-top:3px"><span>Apply the library data to all bolts in the current drawing</span></div>
</div></body></html>
